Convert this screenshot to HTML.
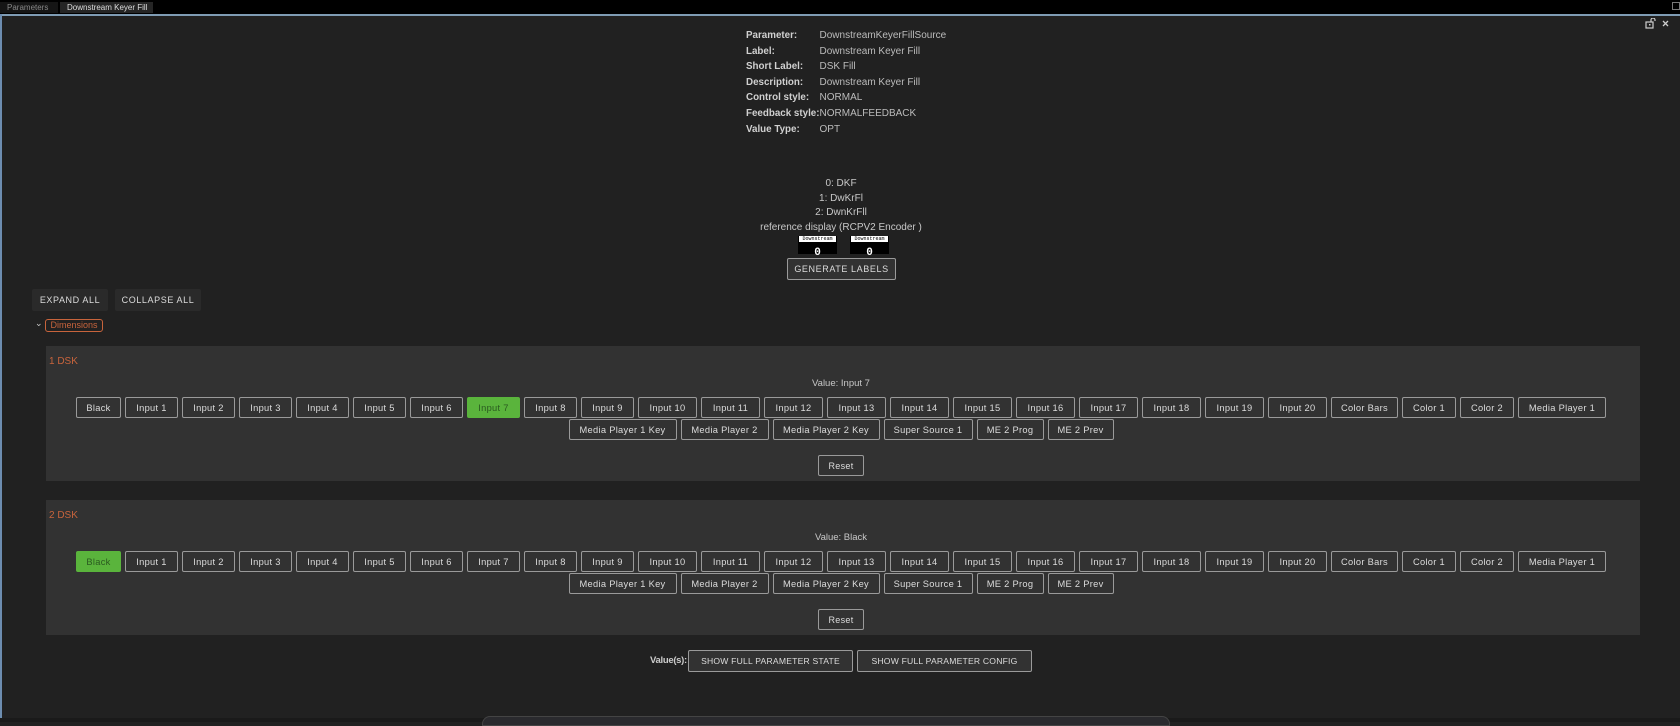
<!DOCTYPE html>
<html><head><meta charset="utf-8"><style>
*{box-sizing:border-box;margin:0;padding:0}
body{width:1680px;height:722px;background:#212121;font-family:"Liberation Sans",sans-serif;color:#c8c8c8;position:relative;overflow:hidden}
.abs{position:absolute}
.tabbar{left:0;top:0;width:1680px;height:14px;background:#000}
.tab{top:2px;height:11px;font-size:8px;line-height:11px;padding-left:7px}
.panelborder{left:0;top:14px;width:1680px;height:2px;background:#7f9cb4}
.leftb{left:0;top:14px;width:2px;height:708px;background:#6d8db0}
.info{left:746px;top:28px;font-size:10px;line-height:15.6px}
.info td{padding:0;white-space:nowrap}
.info td.l{font-weight:bold;color:#d0d0d0;width:73px;font-size:9.8px}
.info td.v{color:#bcbcbc}
.codes{left:741px;top:177px;width:200px;text-align:center;font-size:10px;line-height:14.5px;color:#c8c8c8}
.disp{top:236px;width:39px;height:18px;background:#000;color:#fff;font-family:"Liberation Mono",monospace;text-align:center}
.disp .t{display:block;font-size:5px;line-height:6px;background:#fff;color:#000;margin:0 1px}
.disp .n{font-size:11px;line-height:11px;font-weight:bold}
.btn{border:1px solid #9a9a9a;border-radius:2px;background:#323232;color:#dcdcdc;font-size:9.3px;letter-spacing:.3px;text-align:center;display:flex;align-items:center;justify-content:center;white-space:nowrap}
.flat{background:#2a2a2a;border-radius:2px;color:#dcdcdc;font-size:9px;letter-spacing:.6px;display:flex;align-items:center;justify-content:center}
.dsk{left:46px;width:1594px;height:135px;background:#323232}
.dsk .title{position:absolute;left:3px;top:10px;color:#c8643c;font-size:10px}
.dsk .val{position:absolute;left:0;width:1590px;text-align:center;top:32px;font-size:9.5px;color:#c8c8c8}
.row{position:absolute;left:0;width:1590px;display:flex;justify-content:center;gap:4px}
.row .btn{height:21px}
.green{background:#5ab43c!important;border-color:#5ab43c!important;color:#2a5a20!important}
</style></head><body>
<div class="abs tabbar"></div>
<div class="abs tab" style="left:0;width:58px;background:#151515;color:#888">Parameters</div>
<div class="abs tab" style="left:60px;width:93px;background:#252525;color:#ddd">Downstream Keyer Fill</div>
<div class="abs" style="left:1672px;top:2px;width:8px;height:8px;border:1px solid #777"></div>
<div class="abs panelborder"></div>
<div class="abs leftb"></div>
<svg class="abs" style="left:1645px;top:18px" width="30" height="12" viewBox="0 0 30 12"><rect x="1" y="4" width="7" height="6" fill="none" stroke="#ccc" stroke-width="1.2"/><rect x="4" y="6" width="1.5" height="1.5" fill="#ccc"/><path d="M6 4V2a2 2 0 0 1 4 0v1" fill="none" stroke="#ccc" stroke-width="1.2"/><path d="M18 3l5 5M23 3l-5 5" stroke="#ccc" stroke-width="1.3"/></svg>

<table class="abs info" cellspacing="0">
<tr><td class="l">Parameter:</td><td class="v">DownstreamKeyerFillSource</td></tr>
<tr><td class="l">Label:</td><td class="v">Downstream Keyer Fill</td></tr>
<tr><td class="l">Short Label:</td><td class="v">DSK Fill</td></tr>
<tr><td class="l">Description:</td><td class="v">Downstream Keyer Fill</td></tr>
<tr><td class="l">Control style:</td><td class="v">NORMAL</td></tr>
<tr><td class="l">Feedback style:</td><td class="v">NORMALFEEDBACK</td></tr>
<tr><td class="l">Value Type:</td><td class="v">OPT</td></tr>
</table>
<div class="abs codes">0: DKF<br>1: DwKrFl<br>2: DwnKrFll<br>reference display (RCPV2 Encoder )</div>
<div class="abs disp" style="left:798px"><span class="t">Downstream</span><span class="n">0</span></div>
<div class="abs disp" style="left:850px"><span class="t">Downstream</span><span class="n">0</span></div>
<div class="abs btn" style="left:787px;top:258px;width:109px;height:22px;letter-spacing:.6px;font-size:9px">GENERATE LABELS</div>
<div class="abs flat" style="left:32px;top:289px;width:76px;height:22px">EXPAND ALL</div>
<div class="abs flat" style="left:115px;top:289px;width:86px;height:22px">COLLAPSE ALL</div>
<div class="abs" style="left:35px;top:318px;font-size:9px;color:#ccc">&#8964;</div>
<div class="abs" style="left:45px;top:319px;width:58px;height:13px;border:1px solid #c8643c;border-radius:3px;color:#c8643c;font-size:9px;line-height:11px;text-align:center">Dimensions</div>

<div class="abs dsk" style="top:346px">
<div class="title">1 DSK</div><div class="val">Value: Input 7</div>
<div class="row" style="top:51px">
<div class="btn" style="width:45px">Black</div><div class="btn" style="width:53px">Input 1</div><div class="btn" style="width:53px">Input 2</div><div class="btn" style="width:53px">Input 3</div><div class="btn" style="width:53px">Input 4</div><div class="btn" style="width:53px">Input 5</div><div class="btn" style="width:53px">Input 6</div><div class="btn green" style="width:53px">Input 7</div><div class="btn" style="width:53px">Input 8</div><div class="btn" style="width:53px">Input 9</div><div class="btn" style="width:59px">Input 10</div><div class="btn" style="width:59px">Input 11</div><div class="btn" style="width:59px">Input 12</div><div class="btn" style="width:59px">Input 13</div><div class="btn" style="width:59px">Input 14</div><div class="btn" style="width:59px">Input 15</div><div class="btn" style="width:59px">Input 16</div><div class="btn" style="width:59px">Input 17</div><div class="btn" style="width:59px">Input 18</div><div class="btn" style="width:59px">Input 19</div><div class="btn" style="width:59px">Input 20</div><div class="btn" style="width:67px">Color Bars</div><div class="btn" style="width:54px">Color 1</div><div class="btn" style="width:54px">Color 2</div><div class="btn" style="width:88px">Media Player 1</div>
</div>
<div class="row" style="top:73px">
<div class="btn" style="width:108px">Media Player 1 Key</div><div class="btn" style="width:88px">Media Player 2</div><div class="btn" style="width:107px">Media Player 2 Key</div><div class="btn" style="width:89px">Super Source 1</div><div class="btn" style="width:67px">ME 2 Prog</div><div class="btn" style="width:66px">ME 2 Prev</div>
</div>
<div class="btn" style="position:absolute;left:772px;top:109px;width:46px;height:21px;font-size:9px">Reset</div>
</div>

<div class="abs dsk" style="top:500px">
<div class="title">2 DSK</div><div class="val">Value: Black</div>
<div class="row" style="top:51px">
<div class="btn green" style="width:45px">Black</div><div class="btn" style="width:53px">Input 1</div><div class="btn" style="width:53px">Input 2</div><div class="btn" style="width:53px">Input 3</div><div class="btn" style="width:53px">Input 4</div><div class="btn" style="width:53px">Input 5</div><div class="btn" style="width:53px">Input 6</div><div class="btn" style="width:53px">Input 7</div><div class="btn" style="width:53px">Input 8</div><div class="btn" style="width:53px">Input 9</div><div class="btn" style="width:59px">Input 10</div><div class="btn" style="width:59px">Input 11</div><div class="btn" style="width:59px">Input 12</div><div class="btn" style="width:59px">Input 13</div><div class="btn" style="width:59px">Input 14</div><div class="btn" style="width:59px">Input 15</div><div class="btn" style="width:59px">Input 16</div><div class="btn" style="width:59px">Input 17</div><div class="btn" style="width:59px">Input 18</div><div class="btn" style="width:59px">Input 19</div><div class="btn" style="width:59px">Input 20</div><div class="btn" style="width:67px">Color Bars</div><div class="btn" style="width:54px">Color 1</div><div class="btn" style="width:54px">Color 2</div><div class="btn" style="width:88px">Media Player 1</div>
</div>
<div class="row" style="top:73px">
<div class="btn" style="width:108px">Media Player 1 Key</div><div class="btn" style="width:88px">Media Player 2</div><div class="btn" style="width:107px">Media Player 2 Key</div><div class="btn" style="width:89px">Super Source 1</div><div class="btn" style="width:67px">ME 2 Prog</div><div class="btn" style="width:66px">ME 2 Prev</div>
</div>
<div class="btn" style="position:absolute;left:772px;top:109px;width:46px;height:21px;font-size:9px">Reset</div>
</div>

<div class="abs" style="left:650px;top:655px;font-size:9.5px;font-weight:bold;color:#ccc;letter-spacing:-.3px">Value(s):</div>
<div class="abs btn" style="left:688px;top:650px;width:165px;height:22px;font-size:8.6px;letter-spacing:.2px">SHOW FULL PARAMETER STATE</div>
<div class="abs btn" style="left:857px;top:650px;width:175px;height:22px;font-size:8.6px;letter-spacing:.2px">SHOW FULL PARAMETER CONFIG</div>
<div class="abs" style="left:0;top:718px;width:1680px;height:4px;background:#1a1a1a"></div>
<div class="abs" style="left:482px;top:716px;width:688px;height:10px;background:#2a2a2e;border:1px solid #444;border-radius:8px 8px 0 0"></div>
</body></html>
